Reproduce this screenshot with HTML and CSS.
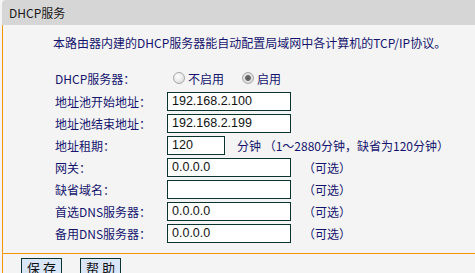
FILE: index.html
```html
<!DOCTYPE html>
<html lang="zh-CN">
<head>
  <meta charset="UTF-8" />
  <title>DHCP服务</title>
  <link rel="stylesheet" href="styles.css">
</head>
<body>
  <div class="title">DHCP服务</div>
  <div class="panel">
    <div class="content">
      <div class="description">本路由器内建的DHCP服务器能自动配置局域网中各计算机的TCP/IP协议。</div>

      <form class="form">
        <div class="row row-radio">
          <span class="label">DHCP服务器：</span>
          <label class="radio"><input type="radio" name="dhcp" /> 不启用</label>
          <label class="radio"><input type="radio" name="dhcp" checked /> 启用</label>
        </div>
        <div class="row">
          <span class="label">地址池开始地址：</span>
          <input class="field" type="text" value="192.168.2.100" />
        </div>
        <div class="row">
          <span class="label">地址池结束地址：</span>
          <input class="field" type="text" value="192.168.2.199" />
        </div>
        <div class="row">
          <span class="label">地址租期：</span>
          <input class="field field-short" type="text" value="120" />
          <span class="unit">分钟&nbsp;（1～2880分钟，缺省为120分钟）</span>
        </div>
        <div class="row">
          <span class="label">网关：</span>
          <input class="field" type="text" value="0.0.0.0" />
          <span class="hint">（可选）</span>
        </div>
        <div class="row">
          <span class="label">缺省域名：</span>
          <input class="field" type="text" value="" />
          <span class="hint">（可选）</span>
        </div>
        <div class="row">
          <span class="label">首选DNS服务器：</span>
          <input class="field" type="text" value="0.0.0.0" />
          <span class="hint">（可选）</span>
        </div>
        <div class="row">
          <span class="label">备用DNS服务器：</span>
          <input class="field" type="text" value="0.0.0.0" />
          <span class="hint">（可选）</span>
        </div>
      </form>
    </div>

    <div class="actions">
      <button class="btn" type="button">保 存</button>
      <button class="btn" type="button">帮 助</button>
    </div>
  </div>
</body>
</html>
```

FILE: styles.css
```css
* {
  box-sizing: border-box;
}
body, html {
  margin: 0;
  padding: 0;
  font-family: "Noto Sans CJK SC", "Liberation Sans", sans-serif;
  font-size: 12px;
  background-color: #f4f4f4;
  color: #14146e;
}
.title {
  margin-left: 2px;
  height: 25px;
  line-height: 25px;
  padding-left: 7px;
  background-color: #d6d6d6;
  border-top-left-radius: 4px;
  color: #1a1a1a;
}
.panel {
  margin-left: 2px;
  border-left: 1px solid #f39800;
}
.content {
  padding: 9px 0 9px 50px;
  border-bottom: 1px solid #f39800;
}
.description {
  height: 18px;
  line-height: 18px;
  margin-bottom: 14px;
}
.form {
  margin: 0 0 0 2px;
}
.row {
  display: flex;
  align-items: center;
  height: 22px;
}
.row-radio {
  height: 24px;
}
.label {
  width: 112px;
  flex-shrink: 0;
}
.radio {
  display: flex;
  align-items: center;
  margin-left: 6px;
  margin-right: 12px;
}
.radio input {
  appearance: none;
  -webkit-appearance: none;
  width: 12px;
  height: 12px;
  margin: 0 3px 0 0;
  border: 1px solid #a8a8a8;
  border-radius: 50%;
  background: radial-gradient(circle at 40% 35%, #ffffff 0%, #e6e6e6 60%, #cfcfcf 100%);
}
.radio input:checked {
  background: radial-gradient(circle, #555555 0, #6e6e6e 2.5px, #e4e4e4 3.5px, #d0d0d0 100%);
}
.field {
  width: 124px;
  height: 19px;
  padding: 0 4px;
  border: 1px solid #0b3330;
  background-color: #ffffff;
  font-family: "Liberation Sans", Arial, sans-serif;
  font-size: 12.5px;
  color: #111111;
  outline: none;
}
.field-short {
  width: 58px;
}
.unit {
  margin-left: 12px;
}
.hint {
  margin-left: 12px;
}
.actions {
  display: flex;
  gap: 18px;
  padding: 4px 0 0 18px;
}
.btn {
  width: 41px;
  height: 20px;
  padding: 0;
  border: 1px solid #0b3330;
  background-color: #d9e6f7;
  font-family: "Noto Sans CJK SC", sans-serif;
  font-size: 13px;
  line-height: 18px;
  color: #111111;
  cursor: pointer;
}
```
